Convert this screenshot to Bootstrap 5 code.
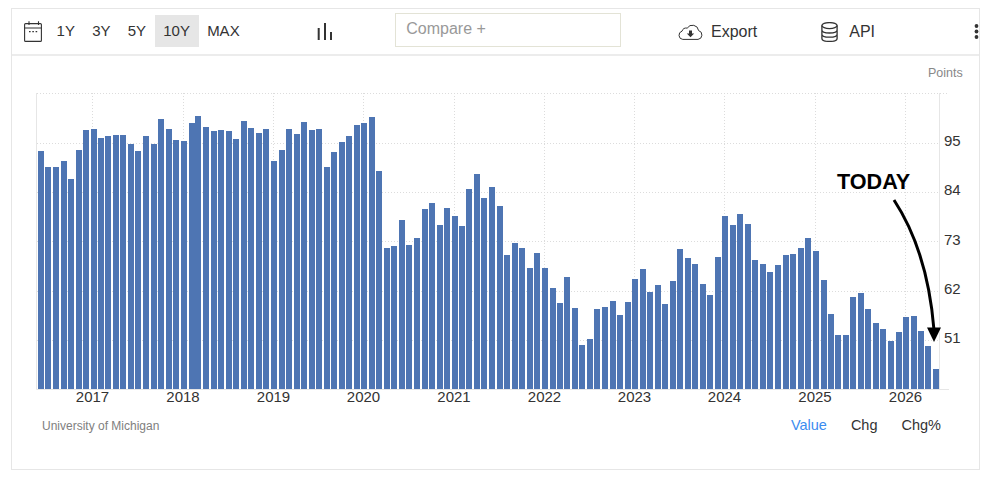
<!DOCTYPE html>
<html lang="en">
<head>
<meta charset="utf-8">
<title>Consumer Sentiment</title>
<link href="https://cdn.jsdelivr.net/npm/bootstrap@5.3.0/dist/css/bootstrap.min.css" rel="stylesheet">
<style>
html,body{background:#fff;height:480px;overflow:hidden}
body{font-family:"Liberation Sans",Arial,sans-serif;color:#333;padding:8px 7px 0 11px}
.tv-card{height:462px;border:1px solid #e6e6e6;border-radius:0;--bs-card-border-color:#e6e6e6}
.tv-toolbar{height:47px;border-bottom:2px solid #ececec;flex:none}
.tv-cal{margin-left:12px;margin-right:6px;flex:none}
.tv-range{height:32px;padding:0 8.6px;border:0;border-radius:0;background:none;color:#333;font-size:15px;line-height:32px;margin-top:-1px}
.tv-range.active{background:#e6e6e6}
.tv-bars{margin-left:69px;flex:none}
.tv-compare{width:243px;height:34px;margin-left:63px;border:1px solid #e3e3d6;border-radius:0;color:#999;font-size:16px;line-height:30px;padding:0 10px;margin-top:-3px}
.tv-link{display:flex;align-items:center;font-size:16px;color:#333;text-decoration:none;flex:none}
.tv-export{margin-left:57px}
.tv-export svg{margin-right:8px}
.tv-api{margin-left:64px}
.tv-api svg{margin-right:11px}
.tv-more{margin-left:99px;flex:none}
.tv-chart{display:block;width:967px;height:359px;flex:none}
.tv-chart text{font-family:"Liberation Sans",Arial,sans-serif}
.tv-tick{font-size:15px;fill:#333}
.tv-unit{font-size:12.5px;fill:#888}
.tv-today{font-size:21.6px;font-weight:700;fill:#000}
.grid{stroke:#dcdcdc;stroke-width:1;stroke-dasharray:1 2;fill:none}
.axis{stroke:#e6e6e6;stroke-width:1;fill:none}
.tv-bar{fill:#4e75b3}
.tv-foot{padding:0 38px 0 30px;margin-top:0}
.tv-source{font-size:12px;color:#808080}
.tv-mode{font-size:14.5px;color:#333;text-decoration:none}
.tv-mode.active{color:#3b8cf0}
</style>
</head>
<body>
<div class="card tv-card">
  <div class="d-flex align-items-center tv-toolbar">
    <svg class="tv-cal" width="18" height="21" viewBox="0 0 18 21" fill="none" stroke="#333" stroke-width="1.1">
      <rect x=".6" y="2.6" width="16.8" height="17.8" rx="1"/>
      <path d="M.6 7h16.8M5 .3v3.6M14.5 .3v3.6"/>
      <path d="M5 10.6h1.6M8.3 10.6h1.6M11.6 10.6h1.6" stroke-width="1.4"/>
    </svg>
    <div class="d-flex">
      <button class="btn tv-range" type="button">1Y</button>
      <button class="btn tv-range" type="button">3Y</button>
      <button class="btn tv-range" type="button">5Y</button>
      <button class="btn tv-range active" type="button">10Y</button>
      <button class="btn tv-range" type="button">MAX</button>
    </div>
    <svg class="tv-bars" width="15" height="17" viewBox="0 0 15 17" fill="none" stroke="#333" stroke-width="2">
      <path d="M1.7 5v12M8 0v17M14 9v8"/>
    </svg>
    <div class="tv-compare">Compare +</div>
    <a class="tv-link tv-export" href="#">
      <svg width="25" height="16" viewBox="0 0 25 16" fill="none" stroke="#333" stroke-width="1">
        <path d="M6 15.4H4.8A4.2 4.2 0 0 1 4 7.2 4.6 4.6 0 0 1 9.2 4.1 6.2 6.2 0 0 1 20.6 6.6 4.5 4.5 0 0 1 20 15.4Z"/>
        <path d="M11 6.6h3v3h2.2l-3.7 3.6-3.7-3.6H11Z" fill="#333" stroke="none"/>
      </svg>Export</a>
    <a class="tv-link tv-api" href="#">
      <svg width="17" height="20" viewBox="0 0 17 20" fill="none" stroke="#333" stroke-width="1.3">
        <ellipse cx="8.5" cy="3.6" rx="7.6" ry="3"/>
        <path d="M.9 3.6v12.8c0 1.7 3.4 3 7.6 3s7.6-1.3 7.6-3V3.6M.9 8c0 1.7 3.4 3 7.6 3s7.6-1.3 7.6-3M.9 12.2c0 1.7 3.4 3 7.6 3s7.6-1.3 7.6-3"/>
      </svg>API</a>
    <svg class="tv-more" width="5" height="15" viewBox="0 0 5 15" fill="#333">
      <circle cx="2.5" cy="2" r="1.9"/><circle cx="2.5" cy="7.5" r="1.9"/><circle cx="2.5" cy="13" r="1.9"/>
    </svg>
  </div>
  <svg class="tv-chart" id="chart" viewBox="12 56 967 359">
    <g id="gridlines">
      <path class="grid" d="M37 93.5H949M37 143.5H940M37 192.5H940M37 241.5H940M37 291.5H940M37 340.5H940"/>
      <path class="grid" d="M92.5 93V389M183.5 93V389M273.5 93V389M363.5 93V389M454.5 93V389M544.5 93V389M634.5 93V389M724.5 93V389M815.5 93V389M905.5 93V389"/>
      <path class="axis" d="M36.5 93V389.5M939.5 93V389.5M36.5 389.5H949"/>
    </g>
    <g id="bars"></g>
    <g class="tv-tick">
      <text x="92.5" y="402" text-anchor="middle">2017</text>
      <text x="183" y="402" text-anchor="middle">2018</text>
      <text x="273.5" y="402" text-anchor="middle">2019</text>
      <text x="363.5" y="402" text-anchor="middle">2020</text>
      <text x="454" y="402" text-anchor="middle">2021</text>
      <text x="544.5" y="402" text-anchor="middle">2022</text>
      <text x="634.5" y="402" text-anchor="middle">2023</text>
      <text x="724.5" y="402" text-anchor="middle">2024</text>
      <text x="815" y="402" text-anchor="middle">2025</text>
      <text x="905.5" y="402" text-anchor="middle">2026</text>
      <text x="944" y="146">95</text>
      <text x="944" y="195">84</text>
      <text x="944" y="245">73</text>
      <text x="944" y="294">62</text>
      <text x="944" y="343">51</text>
    </g>
    <text class="tv-unit" x="928" y="76.5">Points</text>
    <text class="tv-today" x="837" y="189">TODAY</text>
    <path d="M894 200C913 229 929 268 934 330" fill="none" stroke="#000" stroke-width="3"/>
    <path d="M927 327.500H941L934 342Z" fill="#000"/>
  </svg>
  <div class="d-flex justify-content-between align-items-center tv-foot">
    <span class="tv-source">University of Michigan</span>
    <div class="d-flex gap-4">
      <a class="tv-mode active" href="#">Value</a>
      <a class="tv-mode" href="#">Chg</a>
      <a class="tv-mode" href="#">Chg%</a>
    </div>
  </div>
</div>
<script>
var xs=[38,45,53,61,68,76,83,91,98,105,113,120,128,135,143,151,158,166,173,181,189,195,203,211,218,226,233,241,248,256,263,271,279,286,294,301,309,316,324,
331,339,346,354,361,369,376,384,391,399,406,414,422,429,437,444,452,459,466,474,481,489,497,504,512,519,527,534,542,550,557,564,572,579,587,594,602,610,617,625,632,640,647,655,662,670,677,685,692,700,707,715,722,730,737,745,752,760,767,775,783,790,798,805,813,821,828,835,843,850,858,865,873,880,888,896,903,911,918,925,933];
var ys=[151,167,167,161,179,150,130,129,138,136,135,135,144,151,136,144,119,129,140,141,123,116,127,131,130,131,139,121,128,133,129,161,150,129,134,122,130,129,167,
152,142,136,125,123,117,171,248,246,220,245,238,209,203,225,208,216,226,189,174,198,187,206,255,243,248,268,253,268,288,303,277,308,345,339,309,307,301,315,302,279,269,292,285,304,281,249,258,264,284,295,257,216,225,214,224,260,264,272,265,255,254,248,238,251,280,314,335,335,297,293,309,323,329,341,332,317,316,331,346,369];
var g=document.getElementById('bars'),ns='http://www.w3.org/2000/svg';
xs.forEach(function(x,i){var r=document.createElementNS(ns,'rect');r.setAttribute('class','tv-bar');r.setAttribute('x',x);r.setAttribute('y',ys[i]);r.setAttribute('width',6);r.setAttribute('height',389-ys[i]);g.appendChild(r);});
</script>
<script src="https://cdn.jsdelivr.net/npm/bootstrap@5.3.0/dist/js/bootstrap.bundle.min.js"></script>
</body>
</html>
